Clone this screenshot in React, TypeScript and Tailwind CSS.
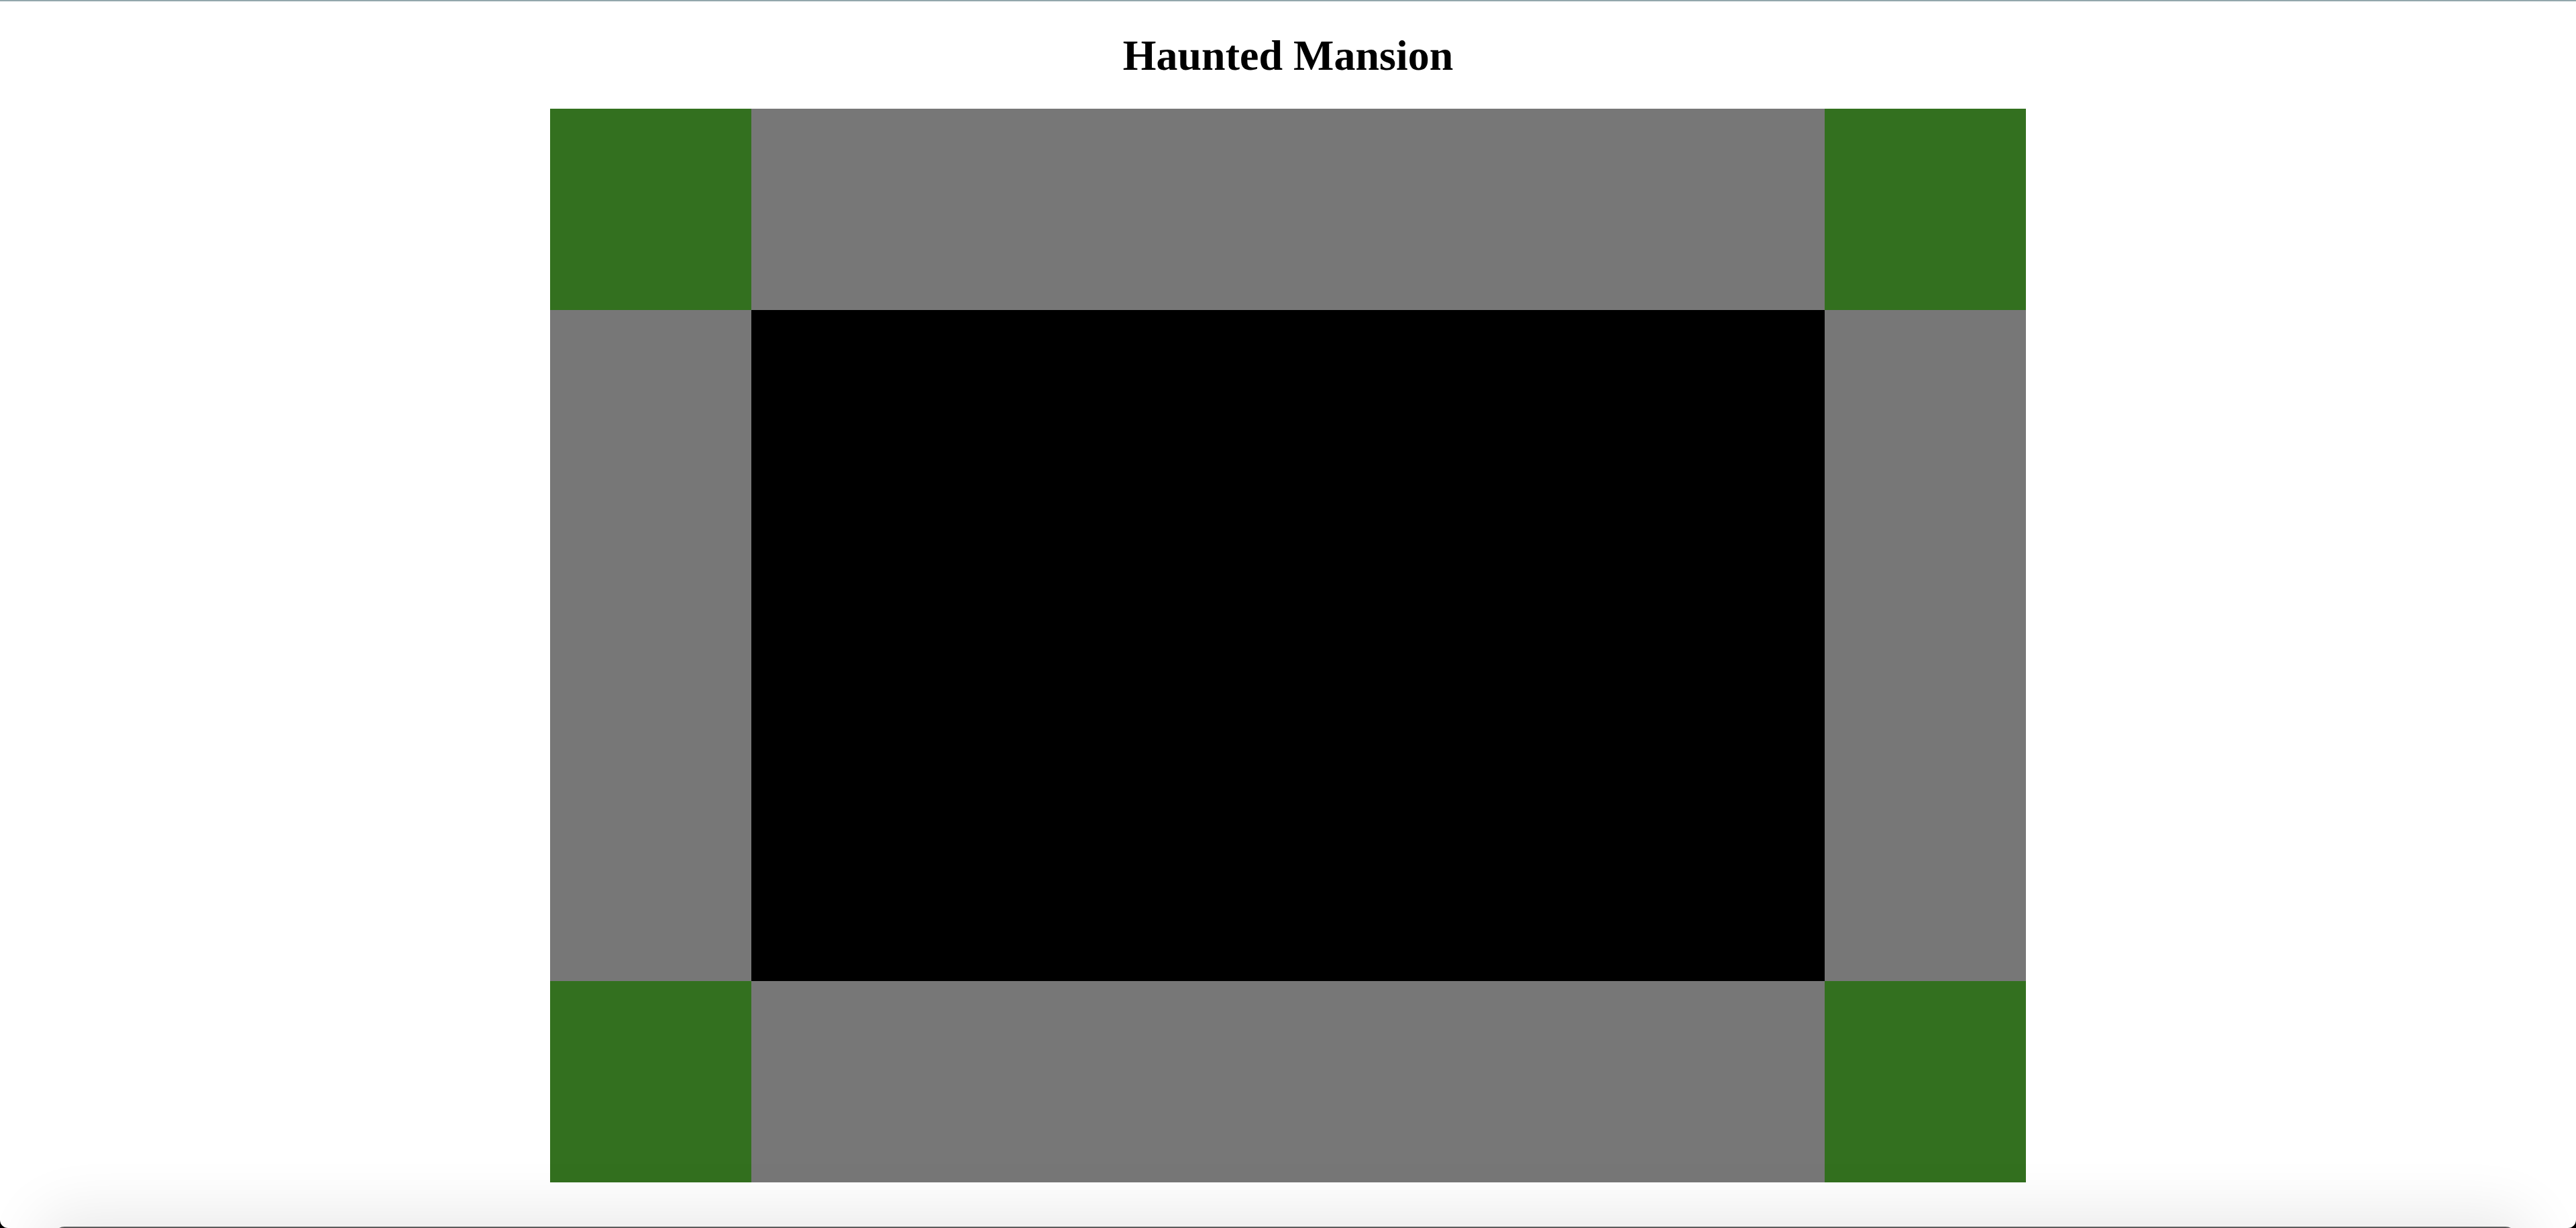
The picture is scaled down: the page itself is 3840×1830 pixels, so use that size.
const green = 'bg-[#33701f]'
const gray = 'bg-[#777777]'

export default function App() {
  return (
    <div className="h-[1830px] w-[3840px] overflow-hidden bg-black">
      <div className="relative h-full w-full overflow-hidden rounded-b-[12px] border-t-2 border-[#93a7ac] bg-white">
        <h1
          className="pt-[49px] text-center text-[64px] leading-[64px] font-bold text-black"
          style={{ fontFamily: '"Liberation Serif", "Times New Roman", serif' }}
        >
          Haunted Mansion
        </h1>

        <div className="mx-auto mt-[47px] grid w-[2200px] grid-cols-[300px_1600px_300px] grid-rows-[300px_1000px_300px]">
          <div className={green} />
          <div className={gray} />
          <div className={green} />
          <div className={gray} />
          <div className="bg-black" />
          <div className={gray} />
          <div className={green} />
          <div className={gray} />
          <div className={green} />
        </div>

        {/* drawer peeking up from under the bottom edge */}
        <div className="absolute top-[1826px] right-[89px] left-[80px] h-[80px] rounded-t-[16px] bg-[#5b5b5b] shadow-[0_0_90px_20px_rgba(0,0,0,0.09)]" />
      </div>
    </div>
  )
}
